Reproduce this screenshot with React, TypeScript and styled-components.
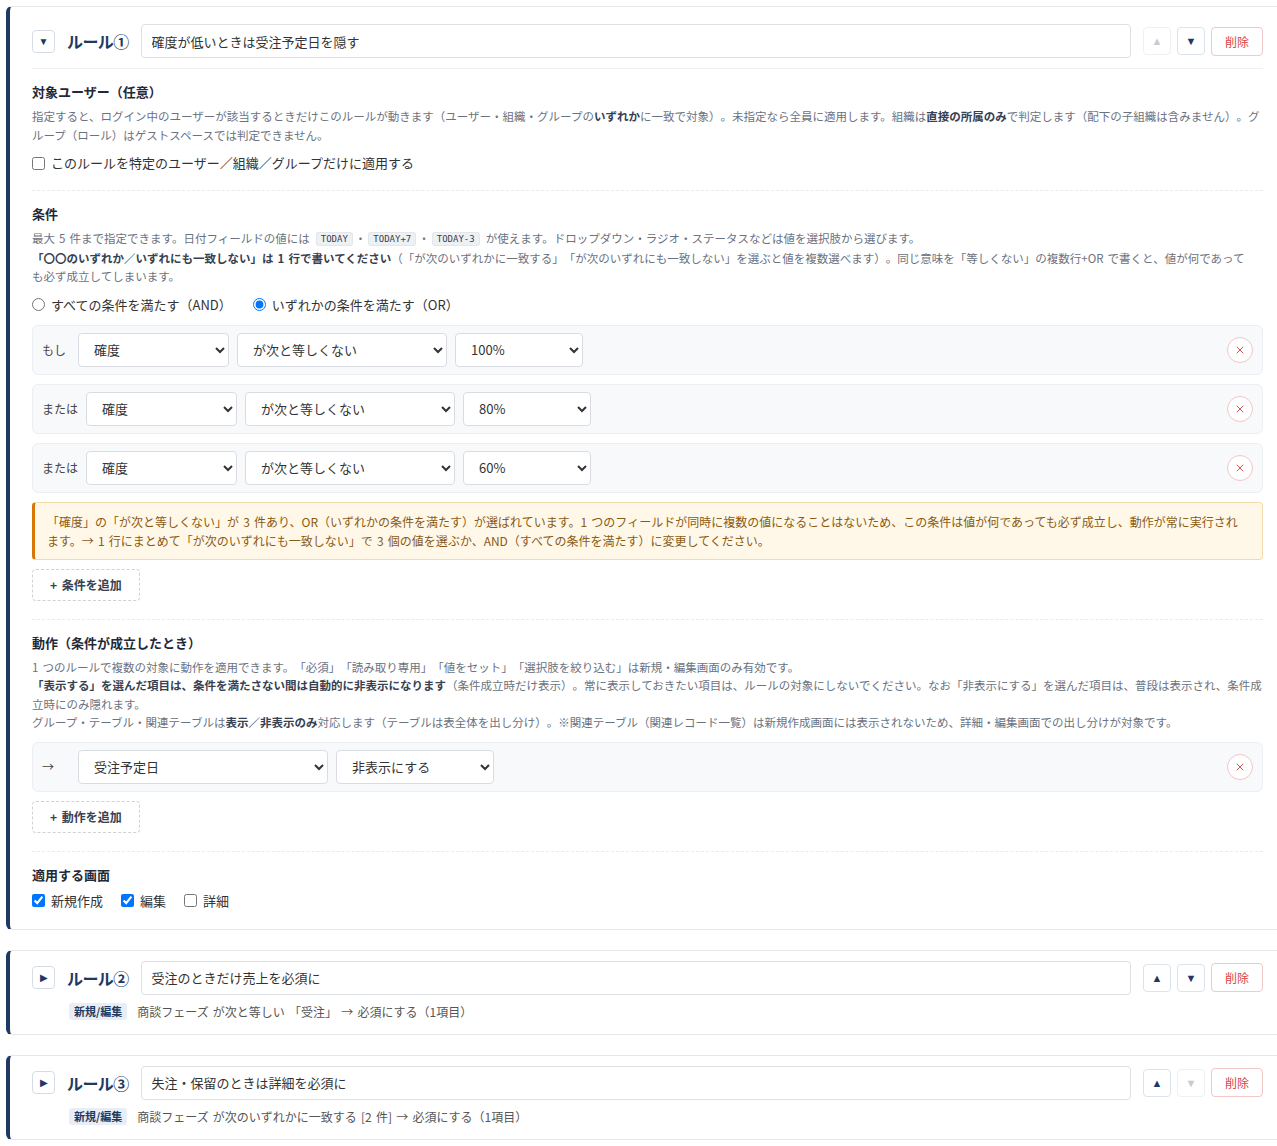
import React from 'react';
import styled, { createGlobalStyle, css } from 'styled-components';
import { X } from 'lucide-react';

const GlobalStyle = createGlobalStyle`
  html, body {
    margin: 0;
    padding: 0;
    background: #fff;
    overflow-x: hidden;
  }
  body {
    font-family: "Noto Sans CJK JP", "Noto Sans", sans-serif;
    color: #333;
    text-spacing-trim: space-all;
  }
  * {
    box-sizing: border-box;
  }
`;

const Page = styled.div`
  padding: 6px 0 0 6px;
`;

const RuleCard = styled.div<{ $open: boolean }>`
  background: #fff;
  border: 1px solid #e5e7eb;
  border-left: 4px solid #1f3864;
  border-radius: 6px;
  margin: 0 -9px 20px 0;
  padding: ${({ $open }) => ($open ? '17px 22px 0' : '10px 22px 14px')};
`;

const Header = styled.div<{ $open: boolean }>`
  display: flex;
  align-items: center;
  gap: 12px;
  ${({ $open }) =>
    $open &&
    css`
      padding-bottom: 10px;
      border-bottom: 1px solid #f0f1f3;
    `}
`;

const ToggleButton = styled.button`
  width: 23px;
  height: 23px;
  padding: 0;
  border: 1px solid #d6dce5;
  border-radius: 4px;
  background: #fff;
  color: #1f3864;
  font-size: 10px;
  display: flex;
  align-items: center;
  justify-content: center;
  flex-shrink: 0;
`;

const RuleName = styled.span`
  font-size: 16px;
  font-weight: 700;
  letter-spacing: -0.6px;
  color: #1e3a5f;
  white-space: nowrap;
`;

const TitleInput = styled.input`
  flex: 1;
  height: 34px;
  border: 1px solid #dcdfe4;
  border-radius: 4px;
  padding: 0 10px;
  font-family: inherit;
  font-size: 13px;
  color: #333;
`;

const HeaderActions = styled.div`
  display: flex;
  align-items: center;
  gap: 6px;
`;

const MoveButton = styled.button<{ $disabled?: boolean }>`
  width: 28px;
  height: 28px;
  padding: 0;
  border: 1px solid ${({ $disabled }) => ($disabled ? '#eef0f3' : '#dde3ea')};
  border-radius: 4px;
  background: #fff;
  color: ${({ $disabled }) => ($disabled ? '#c5cbd3' : '#1f3864')};
  font-size: 11px;
  display: flex;
  align-items: center;
  justify-content: center;
`;

const DeleteButton = styled.button`
  height: 29px;
  padding: 0 13px;
  border: 1px solid #f0c8c8;
  border-radius: 4px;
  background: #fff;
  color: #d64545;
  font-family: inherit;
  font-size: 12px;
`;

const Section = styled.div<{ $last?: boolean }>`
  padding: 14px 0 ${({ $last }) => ($last ? '19px' : '18px')};
  border-bottom: ${({ $last }) => ($last ? 'none' : '1px dashed #e8eaed')};
`;

const SectionTitle = styled.div`
  font-size: 13px;
  font-weight: 700;
  line-height: 18px;
  color: #1f2937;
  margin-bottom: 6px;
`;

const Desc = styled.div`
  font-size: 11.5px;
  line-height: 18.5px;
  word-spacing: 1.5px;
  color: #6b7280;
  white-space: nowrap;
`;

const Strong = styled.b`
  color: #374151;
  font-weight: 700;
`;

const Code = styled.code`
  font-family: "DejaVu Sans Mono", monospace;
  font-size: 9px;
  word-spacing: 0;
  color: #374151;
  background: #eef1f4;
  border: 1px solid #e3e6ea;
  border-radius: 3px;
  padding: 1px 4px;
  margin: 0 2px;
  vertical-align: 1px;
`;

const ChoiceRow = styled.div<{ $top: number; $gap: number }>`
  display: flex;
  align-items: center;
  gap: ${({ $gap }) => $gap}px;
  margin-top: ${({ $top }) => $top}px;
`;

const ChoiceLabel = styled.label`
  display: inline-flex;
  align-items: center;
  gap: 6px;
  font-size: 13px;
  line-height: 18px;
  color: #333;
  white-space: nowrap;

  input {
    margin: 0;
    width: 13px;
    height: 13px;
  }
`;

const RowList = styled.div<{ $top: number }>`
  display: flex;
  flex-direction: column;
  gap: 9px;
  margin-top: ${({ $top }) => $top}px;
`;

const FieldRow = styled.div`
  display: flex;
  align-items: center;
  gap: 8px;
  height: 50px;
  padding: 0 9px;
  background: #f8f9fb;
  border: 1px solid #eceef2;
  border-radius: 6px;
`;

const RowLabel = styled.span`
  min-width: 28px;
  font-size: 12px;
  color: #444;
  white-space: nowrap;
`;

const Select = styled.select<{ $w: number }>`
  width: ${({ $w }) => $w}px;
  height: 34px;
  border: 1px solid #d9dde3;
  border-radius: 4px;
  background: #fff;
  padding: 0 6px 0 11px;
  font-family: inherit;
  font-size: 13px;
  color: #333;
`;

const RemoveButton = styled.button`
  margin-left: auto;
  width: 26px;
  height: 26px;
  padding: 0;
  border: 1px solid #f3c6c6;
  border-radius: 50%;
  background: #fff;
  color: #d9534f;
  display: flex;
  align-items: center;
  justify-content: center;
`;

const Warning = styled.div`
  margin-top: 9px;
  padding: 9px 12px;
  background: #fff8e8;
  border: 1px solid #f3dcaa;
  border-left: 3px solid #d97706;
  border-radius: 4px;
  font-size: 12px;
  line-height: 19px;
  word-spacing: 1.5px;
  color: #8a5a14;
  white-space: nowrap;
`;

const AddButton = styled.button`
  display: block;
  margin-top: 9px;
  height: 32px;
  padding: 0 17px;
  border: 1px dashed #cdd2d8;
  border-radius: 4px;
  background: #fff;
  font-family: inherit;
  font-size: 12px;
  font-weight: 700;
  color: #374151;
  word-spacing: 2px;
`;

const Summary = styled.div`
  display: flex;
  align-items: center;
  gap: 10px;
  margin-top: 8px;
  padding-left: 37px;
`;

const ScreenBadge = styled.span`
  font-size: 11px;
  font-weight: 700;
  line-height: 15px;
  color: #1e3a5f;
  background: #e7eef8;
  border-radius: 3px;
  padding: 1px 5px;
`;

const SummaryText = styled.span`
  font-size: 12px;
  word-spacing: 1.5px;
  color: #555;
`;

const conditions = [
  { label: 'もし', value: '100%' },
  { label: 'または', value: '80%' },
  { label: 'または', value: '60%' },
];

const collapsedRules = [
  {
    name: 'ルール②',
    title: '受注のときだけ売上を必須に',
    canUp: true,
    canDown: true,
    summary: '商談フェーズ が次と等しい 「受注」 → 必須にする（1項目）',
  },
  {
    name: 'ルール③',
    title: '失注・保留のときは詳細を必須に',
    canUp: true,
    canDown: false,
    summary: '商談フェーズ が次のいずれかに一致する [2 件] → 必須にする（1項目）',
  },
];

const RuleHeader: React.FC<{
  open: boolean;
  name: string;
  title: string;
  canUp: boolean;
  canDown: boolean;
}> = ({ open, name, title, canUp, canDown }) => (
  <Header $open={open}>
    <ToggleButton>{open ? '▼' : '▶'}</ToggleButton>
    <RuleName>{name}</RuleName>
    <TitleInput defaultValue={title} />
    <HeaderActions>
      <MoveButton $disabled={!canUp}>▲</MoveButton>
      <MoveButton $disabled={!canDown}>▼</MoveButton>
      <DeleteButton>削除</DeleteButton>
    </HeaderActions>
  </Header>
);

const App: React.FC = () => {
  return (
    <Page>
      <GlobalStyle />
      <RuleCard $open>
        <RuleHeader open name="ルール①" title="確度が低いときは受注予定日を隠す" canUp={false} canDown />

        <Section>
          <SectionTitle>対象ユーザー（任意）</SectionTitle>
          <Desc>
            指定すると、ログイン中のユーザーが該当するときだけこのルールが動きます（ユーザー・組織・グループの<Strong>いずれか</Strong>に一致で対象）。未指定なら全員に適用します。組織は<Strong>直接の所属のみ</Strong>で判定します（配下の子組織は含みません）。グ
            <br />
            ループ（ロール）はゲストスペースでは判定できません。
          </Desc>
          <ChoiceRow $top={10} $gap={18}>
            <ChoiceLabel>
              <input type="checkbox" />
              このルールを特定のユーザー／組織／グループだけに適用する
            </ChoiceLabel>
          </ChoiceRow>
        </Section>

        <Section>
          <SectionTitle>条件</SectionTitle>
          <Desc>
            最大 5 件まで指定できます。日付フィールドの値には <Code>TODAY</Code>・<Code>TODAY+7</Code>・<Code>TODAY-3</Code> が使えます。ドロップダウン・ラジオ・ステータスなどは値を選択肢から選びます。
            <br />
            <Strong>「〇〇のいずれか／いずれにも一致しない」は 1 行で書いてください</Strong>（「が次のいずれかに一致する」「が次のいずれにも一致しない」を選ぶと値を複数選べます）。同じ意味を「等しくない」の複数行+OR で書くと、値が何であって
            <br />
            も必ず成立してしまいます。
          </Desc>
          <ChoiceRow $top={10} $gap={21}>
            <ChoiceLabel>
              <input type="radio" name="logic" />
              すべての条件を満たす（AND）
            </ChoiceLabel>
            <ChoiceLabel>
              <input type="radio" name="logic" defaultChecked />
              いずれかの条件を満たす（OR）
            </ChoiceLabel>
          </ChoiceRow>
          <RowList $top={11}>
            {conditions.map((c, i) => (
              <FieldRow key={i}>
                <RowLabel>{c.label}</RowLabel>
                <Select $w={151} defaultValue="確度">
                  <option>確度</option>
                </Select>
                <Select $w={210} defaultValue="が次と等しくない">
                  <option>が次と等しくない</option>
                </Select>
                <Select $w={128} defaultValue={c.value}>
                  <option>{c.value}</option>
                </Select>
                <RemoveButton>
                  <X size={12} strokeWidth={2} />
                </RemoveButton>
              </FieldRow>
            ))}
          </RowList>
          <Warning>
            「確度」の「が次と等しくない」が 3 件あり、OR（いずれかの条件を満たす）が選ばれています。1 つのフィールドが同時に複数の値になることはないため、この条件は値が何であっても必ず成立し、動作が常に実行され
            <br />
            ます。→ 1 行にまとめて「が次のいずれにも一致しない」で 3 個の値を選ぶか、AND（すべての条件を満たす）に変更してください。
          </Warning>
          <AddButton>+ 条件を追加</AddButton>
        </Section>

        <Section>
          <SectionTitle>動作（条件が成立したとき）</SectionTitle>
          <Desc>
            1 つのルールで複数の対象に動作を適用できます。「必須」「読み取り専用」「値をセット」「選択肢を絞り込む」は新規・編集画面のみ有効です。
            <br />
            <Strong>「表示する」を選んだ項目は、条件を満たさない間は自動的に非表示になります</Strong>（条件成立時だけ表示）。常に表示しておきたい項目は、ルールの対象にしないでください。なお「非表示にする」を選んだ項目は、普段は表示され、条件成
            <br />
            立時にのみ隠れます。
            <br />
            グループ・テーブル・関連テーブルは<Strong>表示／非表示のみ</Strong>対応します（テーブルは表全体を出し分け）。※関連テーブル（関連レコード一覧）は新規作成画面には表示されないため、詳細・編集画面での出し分けが対象です。
          </Desc>
          <RowList $top={10}>
            <FieldRow>
              <RowLabel>→</RowLabel>
              <Select $w={250} defaultValue="受注予定日">
                <option>受注予定日</option>
              </Select>
              <Select $w={158} defaultValue="非表示にする">
                <option>非表示にする</option>
              </Select>
              <RemoveButton>
                <X size={12} strokeWidth={2} />
              </RemoveButton>
            </FieldRow>
          </RowList>
          <AddButton>+ 動作を追加</AddButton>
        </Section>

        <Section $last>
          <SectionTitle>適用する画面</SectionTitle>
          <ChoiceRow $top={8} $gap={18}>
            <ChoiceLabel>
              <input type="checkbox" defaultChecked />
              新規作成
            </ChoiceLabel>
            <ChoiceLabel>
              <input type="checkbox" defaultChecked />
              編集
            </ChoiceLabel>
            <ChoiceLabel>
              <input type="checkbox" />
              詳細
            </ChoiceLabel>
          </ChoiceRow>
        </Section>
      </RuleCard>

      {collapsedRules.map((rule) => (
        <RuleCard key={rule.name} $open={false}>
          <RuleHeader
            open={false}
            name={rule.name}
            title={rule.title}
            canUp={rule.canUp}
            canDown={rule.canDown}
          />
          <Summary>
            <ScreenBadge>新規/編集</ScreenBadge>
            <SummaryText>{rule.summary}</SummaryText>
          </Summary>
        </RuleCard>
      ))}
    </Page>
  );
};

export default App;
